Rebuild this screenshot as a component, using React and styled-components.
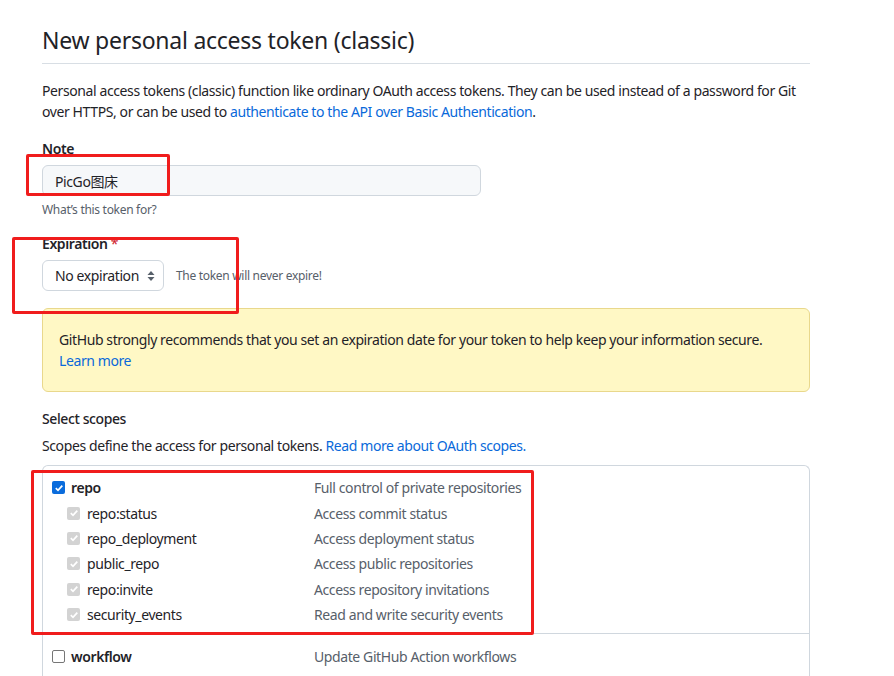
import React from "react";
import styled, { createGlobalStyle } from "styled-components";

const GlobalStyle = createGlobalStyle`
  body {
    margin: 0;
    background: #ffffff;
    font-family: "Noto Sans", "Noto Sans CJK SC", sans-serif;
    color: #1f2328;
    letter-spacing: -0.4px;
  }
`;

const Page = styled.div`
  position: relative;
  width: 768px;
  padding: 22px 0 0 42px;
  height: 654px;
  overflow: hidden;
`;

const Header = styled.div`
  padding-bottom: 5px;
  border-bottom: 1px solid #d8dee4;
`;

const Title = styled.h2`
  margin: 0;
  font-size: 23px;
  line-height: 36px;
  font-weight: 400;
  letter-spacing: -0.25px;
`;

const Intro = styled.p`
  margin: 16px 0 0;
  font-size: 14px;
  line-height: 21px;
`;

const A = styled.a`
  color: #0969da;
  text-decoration: none;
`;

const Label = styled.div`
  margin-top: ${(p) => p.$top}px;
  font-size: 14px;
  line-height: 21px;
  font-weight: 600;

  span {
    color: #cf222e;
    font-weight: 400;
  }
`;

const TextInput = styled.div`
  margin-top: 6px;
  width: 439px;
  height: 31px;
  box-sizing: border-box;
  padding: 0 12px;
  display: flex;
  align-items: center;
  background: #f6f8fa;
  border: 1px solid #d0d7de;
  border-radius: 6px;
  font-size: 14px;
`;

const Hint = styled.div`
  margin-top: 5px;
  font-size: 12px;
  line-height: 18px;
  color: #57606a;
  letter-spacing: -0.3px;
`;

const SelectRow = styled.div`
  margin-top: 6px;
  display: flex;
  align-items: center;
  gap: 12px;
`;

const Select = styled.div`
  height: 31px;
  box-sizing: border-box;
  padding: 0 8px 0 12px;
  display: flex;
  align-items: center;
  gap: 8px;
  border: 1px solid #d0d7de;
  border-radius: 6px;
  font-size: 14px;
`;

const Note = styled.span`
  font-size: 12px;
  color: #57606a;
  letter-spacing: -0.3px;
`;

const Flash = styled.div`
  margin-top: 17px;
  padding: 20px 16px;
  background: #fff8c5;
  border: 1px solid #e9d88c;
  border-radius: 6px;
  font-size: 14px;
  line-height: 21px;
`;

const SubHeading = styled.div`
  margin-top: 16px;
  font-size: 14px;
  line-height: 21px;
  font-weight: 500;
`;

const Text = styled.p`
  margin: 6px 0 0;
  font-size: 14px;
  line-height: 21px;
`;

const ScopeBox = styled.div`
  margin-top: 9px;
  border: 1px solid #d0d7de;
  border-bottom: none;
  border-radius: 6px 6px 0 0;
`;

const Group = styled.div`
  padding: 9px 9px ${(p) => p.$bottom}px;
  border-top: ${(p) => (p.$first ? "none" : "1px solid #d0d7de")};
`;

const Row = styled.div`
  display: grid;
  grid-template-columns: 262px 1fr;
  height: 25.4px;
  align-items: center;
  font-size: 14px;
`;

const Name = styled.label`
  display: flex;
  align-items: center;
  gap: ${(p) => (p.$sub ? 7 : 6)}px;
  padding-left: ${(p) => (p.$sub ? 15 : 0)}px;
  font-weight: ${(p) => (p.$sub ? 400 : 600)};
`;

const Desc = styled.span`
  color: #57606a;
`;

const Box = styled.span`
  width: 13px;
  height: 13px;
  box-sizing: border-box;
  border-radius: 2px;
  display: inline-flex;
  align-items: center;
  justify-content: center;
  background: ${(p) =>
    p.$state === "on" ? "#0a6cdc" : p.$state === "dim" ? "#d3d3d3" : "#fff"};
  border: ${(p) => (p.$state === "off" ? "1px solid #767676" : "none")};
`;

const Mark = styled.div`
  position: absolute;
  left: ${(p) => p.$x}px;
  top: ${(p) => p.$y}px;
  width: ${(p) => p.$w}px;
  height: ${(p) => p.$h}px;
  box-sizing: border-box;
  border: 3px solid #f01c1c;
  border-radius: 2px;
  pointer-events: none;
`;

const Check = ({ state }) => (
  <Box $state={state}>
    {state !== "off" && (
      <svg width="10" height="10" viewBox="0 0 10 10">
        <path d="M1.8 5.2 L4 7.3 L8.3 2.6" fill="none" stroke="#fff" strokeWidth="1.7" />
      </svg>
    )}
  </Box>
);

const Arrows = () => (
  <svg width="8" height="12" viewBox="0 0 8 12">
    <path d="M4 1 L7.5 5 H0.5 Z M4 11 L7.5 7 H0.5 Z" fill="#57606a" />
  </svg>
);

const subScopes = [
  ["repo:status", "Access commit status"],
  ["repo_deployment", "Access deployment status"],
  ["public_repo", "Access public repositories"],
  ["repo:invite", "Access repository invitations"],
  ["security_events", "Read and write security events"],
];

export default function App() {
  return (
    <>
      <GlobalStyle />
      <Page>
        <Header>
          <Title>New personal access token (classic)</Title>
        </Header>
        <Intro>
          Personal access tokens (classic) function like ordinary OAuth access tokens. They can be used
          instead of a password for Git over HTTPS, or can be used to{" "}
          <A href="#">authenticate to the API over Basic Authentication</A>.
        </Intro>

        <Label $top={16}>Note</Label>
        <TextInput>PicGo图床</TextInput>
        <Hint>What’s this token for?</Hint>

        <Label $top={14}>
          Expiration <span>*</span>
        </Label>
        <SelectRow>
          <Select>
            No expiration <Arrows />
          </Select>
          <Note>The token will never expire!</Note>
        </SelectRow>

        <Flash>
          GitHub strongly recommends that you set an expiration date for your token to help keep your
          information secure.
          <br />
          <A href="#">Learn more</A>
        </Flash>

        <SubHeading>Select scopes</SubHeading>
        <Text>
          Scopes define the access for personal tokens.{" "}
          <A href="#">Read more about OAuth scopes.</A>
        </Text>

        <ScopeBox>
          <Group $first $bottom={6}>
            <Row>
              <Name>
                <Check state="on" /> repo
              </Name>
              <Desc>Full control of private repositories</Desc>
            </Row>
            {subScopes.map(([name, desc]) => (
              <Row key={name}>
                <Name $sub>
                  <Check state="dim" /> {name}
                </Name>
                <Desc>{desc}</Desc>
              </Row>
            ))}
          </Group>
          <Group $bottom={9}>
            <Row>
              <Name>
                <Check state="off" /> workflow
              </Name>
              <Desc>Update GitHub Action workflows</Desc>
            </Row>
          </Group>
        </ScopeBox>

        <Mark $x={26} $y={154} $w={144} $h={42} />
        <Mark $x={12} $y={237} $w={227} $h={77} />
        <Mark $x={31} $y={470} $w={503} $h={165} />
      </Page>
    </>
  );
}
